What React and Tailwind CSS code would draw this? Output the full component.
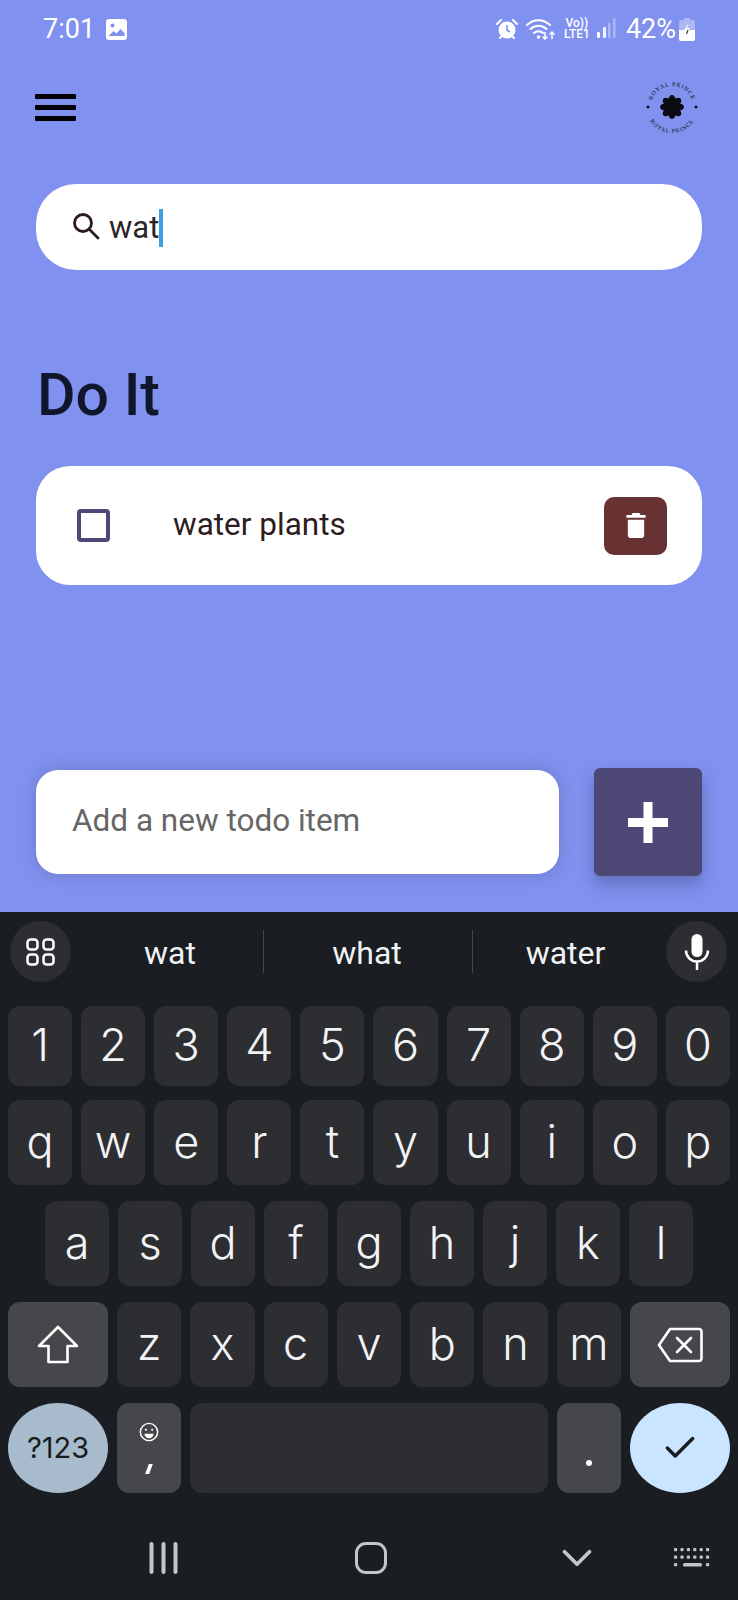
import { Check, ChevronDown } from "lucide-react";

const keyFont = { fontFamily: "Inter, sans-serif" };

function StatusIcons() {
  return (
    <div className="flex items-center text-white">
      {/* alarm */}
      <svg width="22" height="22" viewBox="0 0 22 22" fill="none" className="mr-[8px]">
        <circle cx="11" cy="12" r="8.500" fill="#fff" />
        <path d="M11 7v5l3 2" stroke="#8091ef" strokeWidth="1.600" fill="none" />
        <path d="M1 6l4-4M21 6l-4-4M4 20l2-2M18 20l-2-2" stroke="#fff" strokeWidth="2" strokeLinecap="round" />
      </svg>
      {/* wifi with arrows */}
      <svg width="30" height="22" viewBox="0 0 30 22" fill="none" className="mr-[8px]">
        <path d="M1 7c6.500-6.500 16.500-6.500 23 0M4.500 11c4.500-4.500 11.500-4.500 16 0M8 15c2.500-2.500 6.500-2.500 9 0" stroke="#fff" strokeWidth="2" strokeLinecap="round" />
        <circle cx="12.500" cy="19" r="1.800" fill="#fff" />
        <path d="M19 14v7m-2.500-2.500L19 21l2.500-2.500M26 21v-7m-2.500 2.500L26 14l2.500 2.500" stroke="#fff" strokeWidth="1.500" />
      </svg>
      <div className="flex flex-col items-center mr-[7px] text-[12px] leading-[11px] font-medium">
        <span>Vo))</span>
        <span>LTE1</span>
      </div>
      <svg width="19" height="22" viewBox="0 0 19 22" className="mr-[10px]">
        <rect x="0" y="14" width="3" height="6" rx="1" fill="#fff" />
        <rect x="6" y="9" width="3" height="11" rx="1" fill="#fff" fillOpacity="0.9" />
        <rect x="11" y="5" width="2.500" height="15" rx="1" fill="#fff" fillOpacity="0.35" />
        <rect x="16" y="0" width="2.500" height="20" rx="1" fill="#fff" fillOpacity="0.35" />
      </svg>
      <span className="text-[27px] leading-none mr-[3px]">42%</span>
      <svg width="16" height="23" viewBox="0 0 16 23">
        <path d="M5 0h6v2h3a2 2 0 0 1 2 2v17a2 2 0 0 1-2 2H2a2 2 0 0 1-2-2V4a2 2 0 0 1 2-2h3z" fill="#fff" fillOpacity="0.35" />
        <path d="M0 12h16v9a2 2 0 0 1-2 2H2a2 2 0 0 1-2-2z" fill="#fff" />
        <path d="M10 5l-5 7h3l-2 6 5-8H8z" fill="#fff" />
        <path d="M9 12l-1.500 4" stroke="#333" strokeWidth="1.200" />
      </svg>
    </div>
  );
}

function Logo() {
  const petals = [0, 45, 90, 135, 180, 225, 270, 315];
  return (
    <svg width="54" height="54" viewBox="0 0 54 54">
      <defs>
        <path id="logoTop" d="M6 27a21 21 0 0 1 42 0" />
        <path id="logoBottom" d="M1 27a26 26 0 0 0 52 0" />
      </defs>
      <text fontSize="6" fontFamily="Liberation Serif, serif" letterSpacing="0.800" fill="#111">
        <textPath href="#logoTop" startOffset="50%" textAnchor="middle">ROYAL PRINCE</textPath>
      </text>
      <text fontSize="6" fontFamily="Liberation Serif, serif" letterSpacing="0.800" fill="#111">
        <textPath href="#logoBottom" startOffset="50%" textAnchor="middle">ROYAL PRINCE</textPath>
      </text>
      <circle cx="3" cy="27" r="1.500" fill="#111" />
      <circle cx="51" cy="27" r="1.500" fill="#111" />
      <circle cx="27" cy="27" r="7" fill="#0b0b12" />
      {petals.map((a) => (
        <ellipse key={a} cx="27" cy="20" rx="3.500" ry="5" fill="#0b0b12" transform={`rotate(${a} 27 27)`} />
      ))}
    </svg>
  );
}

function Key({ children, dark, className = "" }) {
  return (
    <div
      style={keyFont}
      className={`flex items-center justify-center rounded-[12px] text-[#f2f3f5] text-[45px] font-light ${dark ? "bg-[#46474b]" : "bg-[#2d2e32]"} ${className}`}
    >
      {children}
    </div>
  );
}

function KeyRow({ keys, className }) {
  return (
    <div className={`flex gap-[9px] ${className}`}>
      {keys.map((k) => (
        <Key key={k} className="flex-1 pb-[2px]">{k}</Key>
      ))}
    </div>
  );
}

function Keyboard() {
  return (
    <div className="h-[688px] bg-[#1a1d21] flex flex-col">
      {/* suggestions */}
      <div className="h-[94px] flex items-start pt-[9px] pl-[10px] text-[#f1f2f4] text-[32px]">
        <div className="w-[61px] h-[61px] rounded-full bg-[#2d2e32] flex items-center justify-center shrink-0">
          <svg width="29" height="28" viewBox="0 0 29 28" fill="none" stroke="#fff" strokeWidth="2.500">
            <rect x="1.500" y="1.500" width="10" height="10" rx="3" />
            <rect x="17.500" y="1.500" width="10" height="10" rx="3" />
            <rect x="1.500" y="16.500" width="10" height="10" rx="3" />
            <rect x="17.500" y="16.500" width="10" height="10" rx="3" />
          </svg>
        </div>
        <div className="w-[192px] h-[61px] pl-[6px] pt-[3px] flex items-center justify-center">wat</div>
        <div className="w-px h-[43px] mt-[9px] bg-[#44474b]" />
        <div className="w-[208px] h-[61px] pr-[2px] pt-[3px] flex items-center justify-center">what</div>
        <div className="w-px h-[43px] mt-[9px] bg-[#44474b]" />
        <div className="w-[193px] h-[61px] pr-[8px] pt-[3px] flex items-center justify-center">water</div>
        <div className="w-[61px] h-[61px] rounded-full bg-[#2d2e32] flex items-center justify-center shrink-0">
          <svg width="26" height="36" viewBox="0 0 26 36" fill="none">
            <rect x="7.500" y="0" width="11" height="23" rx="5.500" fill="#fff" />
            <path d="M2 16.500a11 11 0 0 0 22 0M13 27.500V36" stroke="#fff" strokeWidth="2.500" />
          </svg>
        </div>
      </div>

      <div className="flex flex-col px-2">
        <KeyRow keys={["1", "2", "3", "4", "5", "6", "7", "8", "9", "0"]} className="h-[80px]" />
        <KeyRow keys={["q", "w", "e", "r", "t", "y", "u", "i", "o", "p"]} className="h-[85px] mt-[14px]" />
        <KeyRow keys={["a", "s", "d", "f", "g", "h", "j", "k", "l"]} className="h-[85px] mt-[16px] px-[37px]" />
        <div className="flex gap-[9px] h-[85px] mt-[16px]">
          <Key dark className="w-[100px]">
            <svg width="42" height="40" viewBox="0 0 42 40" fill="none" stroke="#fff" strokeWidth="2.600" strokeLinejoin="round">
              <path d="M21 2L2 21h9.500v16h19V21H40z" />
            </svg>
          </Key>
          {["z", "x", "c", "v", "b", "n", "m"].map((k) => (
            <Key key={k} className="flex-1 pb-[2px]">{k}</Key>
          ))}
          <Key dark className="w-[100px]">
            <svg width="46" height="36" viewBox="0 0 46 36" fill="none" stroke="#fff" strokeWidth="2.600" strokeLinejoin="round">
              <path d="M13 2h29a2.500 2.500 0 0 1 2.500 2.500v27a2.500 2.500 0 0 1-2.500 2.500H13L2 18z" />
              <path d="M20 11l14 14M34 11L20 25" strokeLinecap="round" />
            </svg>
          </Key>
        </div>
        <div className="flex gap-[9px] h-[90px] mt-[16px]">
          <div style={keyFont} className="w-[100px] rounded-[50%] bg-[#a7bbcd] flex items-center justify-center text-[#181c20] text-[29px]">?123</div>
          <Key dark className="w-[64px] flex-col">
            <svg width="20" height="20" viewBox="0 0 22 22" fill="none" stroke="#fff" strokeWidth="1.600" className="mb-[22px]">
              <circle cx="11" cy="11" r="9.500" />
              <circle cx="7.500" cy="8.500" r="1.200" fill="#fff" stroke="none" />
              <circle cx="14.500" cy="8.500" r="1.200" fill="#fff" stroke="none" />
              <path d="M6 13h10a5 5 0 0 1-10 0z" fill="#fff" stroke="none" />
            </svg>
            <span className="block h-[10px] w-[4px] bg-white -skew-x-[20deg]" aria-label="," />
          </Key>
          <Key className="flex-1" />
          <Key dark className="w-[64px] items-end pb-[27px]">
            <span className="block w-[6px] h-[6px] rounded-full bg-white" aria-label="." />
          </Key>
          <div className="w-[100px] rounded-[50%] bg-[#c9e5ff] flex items-center justify-center">
            <Check size={38} strokeWidth={2.200} className="text-[#181c20]" />
          </div>
        </div>
      </div>

      {/* nav bar */}
      <div className="flex items-center mt-[40px] pl-[149px] text-[#c4c5c7]">
        <svg width="29" height="32" viewBox="0 0 29 32" fill="none" stroke="currentColor" strokeWidth="4" strokeLinecap="round">
          <path d="M2.500 2v28M14.500 2v28M26.500 2v28" />
        </svg>
        <div className="w-[32px] h-[32px] ml-[177px] rounded-[11px] border-[3.500px] border-[#c4c5c7]" />
        <ChevronDown size={50} strokeWidth={1.800} className="ml-[165px]" />
        <svg width="37" height="20" viewBox="0 0 37 20" fill="currentColor" className="ml-[72px]">
          {[0, 1, 2].map((r) =>
            [0, 1, 2, 3, 4, 5].map((c) =>
              r === 2 && c > 0 && c < 5 ? null : (
                <rect key={`${r}-${c}`} x={c * 6.400} y={r * 7.500} width="3.200" height="3.200" rx="1" />
              )
            )
          )}
          <rect x="9" y="15" width="19" height="3.500" rx="1.500" />
        </svg>
      </div>
    </div>
  );
}

export default function App() {
  return (
    <div className="w-[738px] h-[1600px] overflow-hidden flex flex-col" style={{ fontFamily: "Roboto, sans-serif" }}>
      <div className="h-[912px] bg-[#8091ef] flex flex-col relative">
        {/* status bar */}
        <div className="flex items-center justify-between h-[22px] mt-[18px] pl-[43px] pr-[43px]">
          <div className="flex items-center text-white">
            <span className="text-[27px] leading-none">7:01</span>
            <svg width="21" height="21" viewBox="0 0 21 21" className="ml-[11px]">
              <rect width="21" height="21" rx="3" fill="#fff" />
              <circle cx="6.500" cy="6.500" r="2" fill="#8091ef" />
              <path d="M2.500 17l5-5 3 2.500 4-4.500 4 4v3z" fill="#8091ef" />
            </svg>
          </div>
          <StatusIcons />
        </div>

        {/* header */}
        <div className="flex items-center justify-between mt-[40px] pl-[35px] pr-[39px] h-[54px]">
          <div className="flex flex-col gap-[6px] w-[41px]">
            <div className="h-[5px] rounded-[1px] bg-black" />
            <div className="h-[5px] rounded-[1px] bg-black" />
            <div className="h-[5px] rounded-[1px] bg-black" />
          </div>
          <Logo />
        </div>

        {/* search */}
        <div className="mx-[36px] mt-[50px] h-[86px] rounded-[40px] bg-white flex items-center pl-[36px]">
          <svg width="28" height="28" viewBox="0 0 28 28" fill="none" stroke="#2b1b1b" strokeWidth="2.800" className="mr-[9px] mb-[2px]">
            <circle cx="11" cy="11" r="8.500" />
            <path d="M17 17l9 9" strokeLinecap="round" />
          </svg>
          <span className="text-[31px] text-[#2a2528] leading-none">wat</span>
          <span className="w-[4px] h-[38px] bg-[#3f9fe6] mt-[2px]" />
        </div>

        <h1 className="ml-[37px] mt-[91px] text-[59px] leading-[68px] font-medium text-[#10162c]">Do It</h1>

        {/* todo card */}
        <div className="mx-[36px] mt-[37px] h-[119px] rounded-[34px] bg-white flex items-center pl-[41px] pr-[35px]">
          <div className="w-[33px] h-[33px] rounded-[4px] border-[4px] border-[#4d4875]" />
          <span className="ml-[63px] pb-[2px] flex-1 text-[31.500px] text-[#2d1c20]">water plants</span>
          <button className="w-[63px] h-[58px] rounded-[10px] bg-[#683232] flex items-center justify-center">
            <svg width="20" height="25" viewBox="0 0 20 26" fill="#fff">
              <path d="M6.500 0h7l1.300 2H20v3H0V2h5.200z" />
              <path d="M1.500 7h17v16.500A2.500 2.500 0 0 1 16 26H4a2.500 2.500 0 0 1-2.500-2.500z" />
            </svg>
          </button>
        </div>

        {/* add row */}
        <div className="mt-auto mb-[36px] mx-[36px] flex items-center justify-between">
          <div className="w-[523px] h-[104px] rounded-[22px] bg-white flex items-center pl-[36px] pb-[3px] text-[31.500px] text-[#666666] shadow-[0_0_16px_rgba(70,70,100,0.3)]">
            Add a new todo item
          </div>
          <button className="w-[108px] h-[108px] rounded-[6px] bg-[#4d4875] flex items-center justify-center shadow-[0_8px_16px_rgba(50,50,90,0.35)]">
            <svg width="40" height="41" viewBox="0 0 40 41" fill="#fff">
              <path d="M15.500 0h9v16h15.500v9H24.500v16h-9V25H0v-9h15.500z" />
            </svg>
          </button>
        </div>
      </div>
      <Keyboard />
    </div>
  );
}
